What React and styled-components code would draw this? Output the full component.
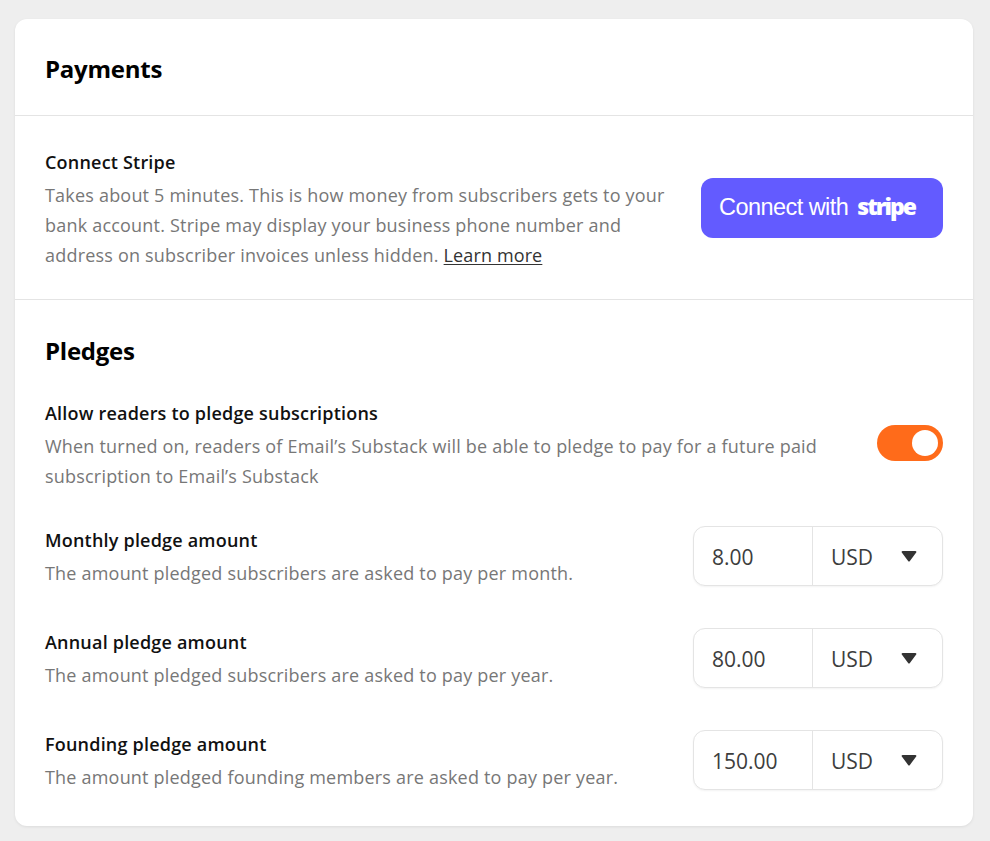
import React from "react";
import styled, { createGlobalStyle } from "styled-components";

const Global = createGlobalStyle`
  html, body { margin: 0; padding: 0; background: #eeeeee; }
  body { font-family: "Open Sans", "Noto Sans", sans-serif; }
  * { box-sizing: border-box; }
`;

const Page = styled.div`
  padding: 19px 17px 15px 15px;
`;

const Card = styled.div`
  background: #fff;
  border-radius: 12px;
  box-shadow: 0 1px 3px rgba(0, 0, 0, 0.08);
  height: 807px;
`;

const Header = styled.div`
  height: 97px;
  padding: 3px 30px 0;
  display: flex;
  align-items: center;
  border-bottom: 1px solid #e4e4e4;
`;

const Heading = styled.h2`
  margin: 0;
  font-size: 24px;
  line-height: 30px;
  font-weight: 700;
  letter-spacing: -0.25px;
  color: #000;
`;

const StripeSection = styled.div`
  height: 184px;
  padding: 34px 30px 0;
  display: flex;
  justify-content: space-between;
  align-items: flex-start;
  border-bottom: 1px solid #e4e4e4;
`;

const PledgeSection = styled.div`
  padding: 36px 30px 0;
  display: flex;
  flex-direction: column;
`;

const Row = styled.div`
  display: flex;
  justify-content: space-between;
  align-items: flex-start;
  margin-top: ${(p) => p.$top || 0}px;
`;

const TextBlock = styled.div`
  width: ${(p) => p.$width}px;
  padding-top: ${(p) => p.$pad || 0}px;
`;

const Label = styled.div`
  font-size: 18px;
  line-height: 24px;
  font-weight: 600;
  letter-spacing: 0.2px;
  color: #111;
`;

const Desc = styled.div`
  margin-top: ${(p) => p.$gap || 0}px;
  font-size: 18px;
  line-height: 30px;
  letter-spacing: 0.2px;
  color: #777;
`;

const More = styled.a`
  color: #333;
  text-decoration: underline;
  text-underline-offset: 2px;
  letter-spacing: 0.12px;
`;

const StripeButton = styled.button`
  width: 242px;
  height: 60px;
  margin-top: 28px;
  padding: 0 0 2px 18px;
  border: 0;
  border-radius: 12px;
  background: #635bff;
  color: #fff;
  display: flex;
  align-items: center;
  gap: 9px;
`;

const ConnectText = styled.span`
  font-family: "Liberation Sans", Arial, sans-serif;
  font-size: 23.5px;
  letter-spacing: -0.55px;
`;

const StripeWord = styled.span`
  font-family: "Open Sans", sans-serif;
  font-size: 23px;
  line-height: 26px;
  font-weight: 800;
  letter-spacing: -2px;
  margin-bottom: 2px;
`;

const Toggle = styled.div`
  width: 66px;
  height: 36px;
  margin-top: ${(p) => p.$top}px;
  padding: 5px;
  border-radius: 18px;
  background: #ff6b1a;
  display: flex;
  justify-content: flex-end;
`;

const Knob = styled.div`
  width: 26px;
  height: 26px;
  border-radius: 50%;
  background: #fff;
`;

const AmountField = styled.div`
  width: 250px;
  height: 60px;
  display: flex;
  border: 1px solid #e4e4e4;
  border-radius: 12px;
  box-shadow: 0 1px 2px rgba(0, 0, 0, 0.05);
  font-size: 21px;
  color: #3d3d3d;
  background: #fff;
`;

const Amount = styled.div`
  width: 119px;
  padding: 1px 0 0 18px;
  display: flex;
  align-items: center;
  border-right: 1px solid #e4e4e4;
`;

const Currency = styled.div`
  flex: 1;
  padding: 1px 25px 0 18px;
  display: flex;
  align-items: center;
  justify-content: space-between;
`;

const CaretIcon = styled.svg`
  margin-top: -2px;
`;

const Caret = () => (
  <CaretIcon width="16" height="12" viewBox="0 0 16 12">
    <path d="M1.6 1h12.8a1 1 0 0 1 .8 1.6L8.9 10.9a1.1 1.1 0 0 1-1.8 0L.8 2.6A1 1 0 0 1 1.6 1z" fill="#333" />
  </CaretIcon>
);

const pledges = [
  { label: "Monthly pledge amount", desc: "The amount pledged subscribers are asked to pay per month.", value: "8.00" },
  { label: "Annual pledge amount", desc: "The amount pledged subscribers are asked to pay per year.", value: "80.00" },
  { label: "Founding pledge amount", desc: "The amount pledged founding members are asked to pay per year.", value: "150.00" },
];

export default function App() {
  return (
    <Page>
      <Global />
      <Card>
        <Header>
          <Heading>Payments</Heading>
        </Header>
        <StripeSection>
          <TextBlock $width={630}>
            <Label>Connect Stripe</Label>
            <Desc $gap={6}>
              Takes about 5 minutes. This is how money from subscribers gets to your bank account. Stripe may display your business phone number and address on subscriber invoices unless hidden. <More>Learn more</More>
            </Desc>
          </TextBlock>
          <StripeButton>
            <ConnectText>Connect with</ConnectText>
            <StripeWord>stripe</StripeWord>
          </StripeButton>
        </StripeSection>
        <PledgeSection>
          <Heading>Pledges</Heading>
          <Row $top={35}>
            <TextBlock $width={790}>
              <Label>Allow readers to pledge subscriptions</Label>
              <Desc $gap={6}>
                When turned on, readers of Email’s Substack will be able to pledge to pay for a future paid subscription to Email’s Substack
              </Desc>
            </TextBlock>
            <Toggle $top={24}>
              <Knob />
            </Toggle>
          </Row>
          {pledges.map((p, i) => (
            <Row key={p.label} $top={i === 0 ? 35 : 40}>
              <TextBlock $width={620} $pad={2}>
                <Label>{p.label}</Label>
                <Desc $gap={6}>{p.desc}</Desc>
              </TextBlock>
              <AmountField>
                <Amount>{p.value}</Amount>
                <Currency>
                  USD
                  <Caret />
                </Currency>
              </AmountField>
            </Row>
          ))}
        </PledgeSection>
      </Card>
    </Page>
  );
}
